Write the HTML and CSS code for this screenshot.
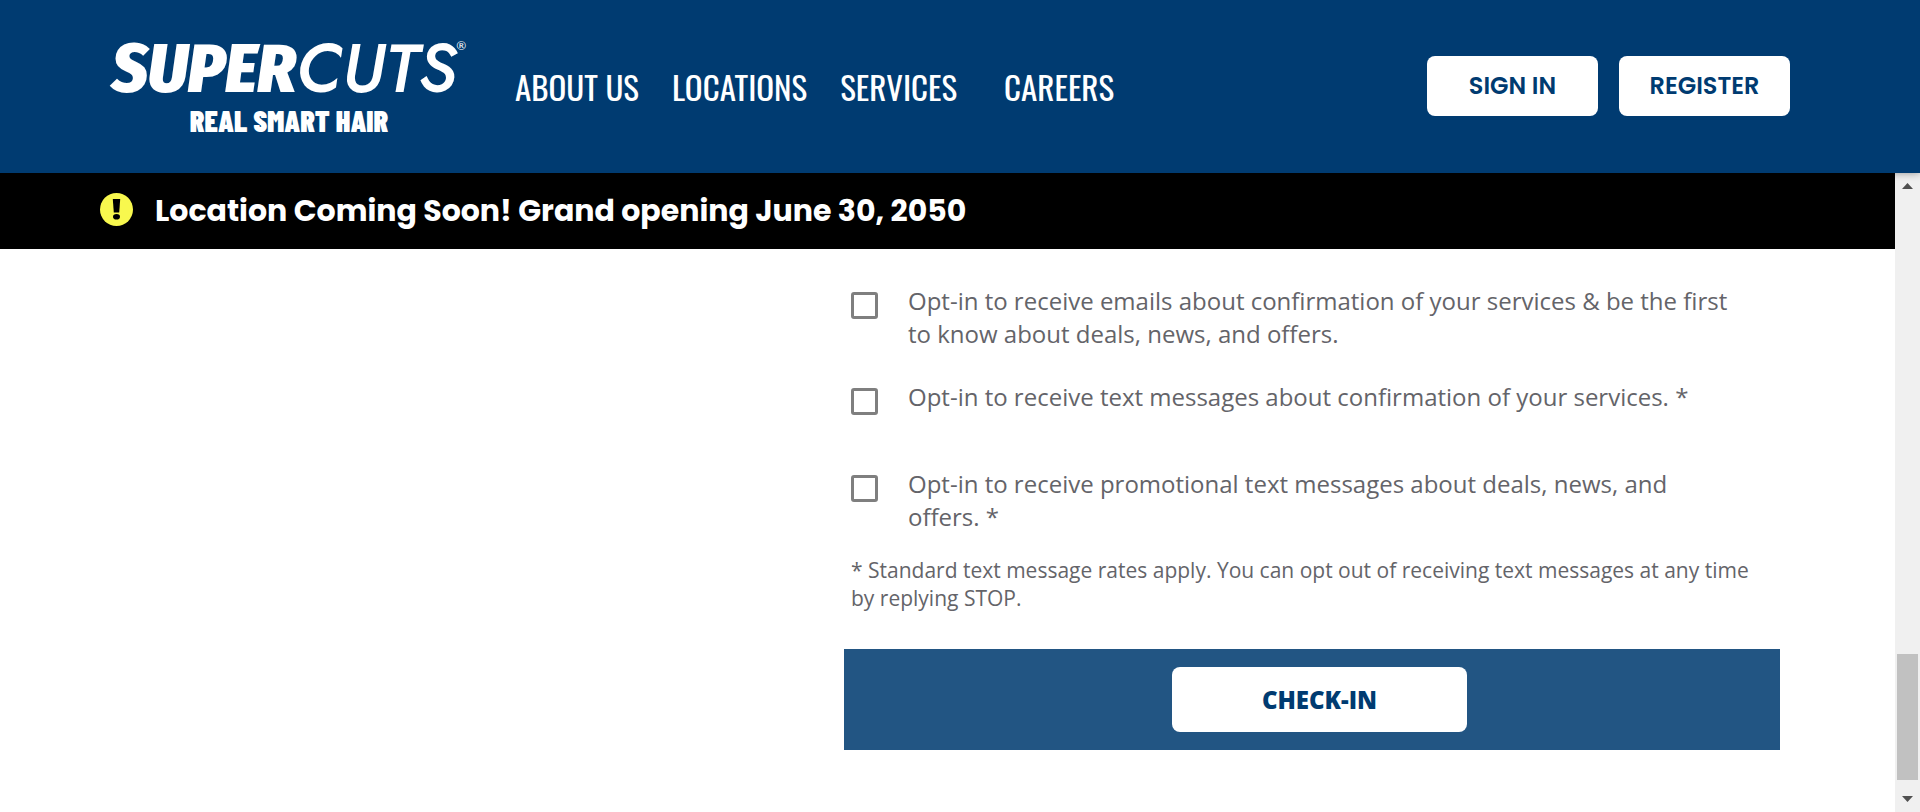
FILE: index.html
```html
<!DOCTYPE html>
<html lang="en">
<head>
<meta charset="utf-8">
<meta name="viewport" content="width=device-width, initial-scale=1">
<title>Supercuts Check-In</title>
<link rel="stylesheet" href="styles.css">
</head>
<body>
<div class="page">
  <header class="header">
    <a class="logo" href="#">
      <span class="logo-name"><span class="logo-super">SUPER</span><span class="logo-cuts">CUTS</span><span class="logo-mark">®</span></span>
      <span class="logo-tagline">REAL SMART HAIR</span>
    </a>
    <nav class="nav">
      <a href="#">ABOUT US</a>
      <a href="#">LOCATIONS</a>
      <a href="#">SERVICES</a>
      <a class="nav-last" href="#">CAREERS</a>
    </nav>
    <div class="account">
      <button class="button" type="button">SIGN IN</button>
      <button class="button" type="button">REGISTER</button>
    </div>
  </header>
  <div class="body">
    <main class="main">
      <div class="banner" role="status">
        <svg class="banner-icon" viewBox="0 0 33 33" aria-hidden="true">
          <circle cx="16.5" cy="16.5" r="16.5" fill="#f8f84e"/>
          <path d="M12.8 6h7.4l-1 13.6h-5.4z" fill="#000"/>
          <ellipse cx="16.5" cy="23.7" rx="3.5" ry="2.8" fill="#000"/>
        </svg>
        <p class="banner-text">Location Coming Soon! Grand opening June 30, 2050</p>
      </div>
      <div class="content">
        <form class="form">
          <div class="options">
            <div class="option">
              <input type="checkbox" id="opt-email">
              <label for="opt-email">Opt-in to receive emails about confirmation of your services &amp; be the first to know about deals, news, and offers.</label>
            </div>
            <div class="option">
              <input type="checkbox" id="opt-text">
              <label for="opt-text">Opt-in to receive text messages about confirmation of your services. *</label>
            </div>
            <div class="option">
              <input type="checkbox" id="opt-promo">
              <label for="opt-promo">Opt-in to receive promotional text messages about deals, news, and offers. *</label>
            </div>
          </div>
          <p class="note">* Standard text message rates apply. You can opt out of receiving text messages at any time by replying STOP.</p>
          <div class="actions">
            <button class="button button-checkin" type="button">CHECK-IN</button>
          </div>
        </form>
      </div>
    </main>
    <div class="scrollbar" aria-hidden="true">
      <svg class="scroll-arrow" viewBox="0 0 11 6"><path d="M0 6 5.5 0 11 6z"/></svg>
      <div class="scroll-track"><div class="scroll-thumb"></div></div>
      <svg class="scroll-arrow" viewBox="0 0 11 6"><path d="M0 0 5.5 6 11 0z"/></svg>
    </div>
  </div>
</div>
</body>
</html>
```
FILE: styles.css
```css
* {
  box-sizing: border-box;
}

body {
  margin: 0;
  background: #fff;
  color: #646469;
  font-family: "Open Sans", sans-serif;
}

.page {
  display: flex;
  flex-direction: column;
  min-height: 100vh;
}

.header {
  display: flex;
  align-items: center;
  padding: 36px 130px 37px 113px;
  background: #003b71;
  box-shadow: 0 0 8px rgba(0, 0, 0, 0.4);
  z-index: 1;
}

.logo {
  display: flex;
  flex-direction: column;
  align-items: center;
  width: 352px;
  color: #fff;
  text-decoration: none;
  white-space: nowrap;
}

.logo-name {
  display: flex;
  align-items: baseline;
  height: 68px;
}

.logo-super {
  font: italic 900 69px/66px "Fira Sans Condensed", "Barlow Condensed", Oswald, sans-serif;
}

.logo-cuts {
  font: italic 500 68px/66px Jost, Lato, sans-serif;
}

.logo-mark {
  align-self: flex-start;
  font: 12px/20px Lato, sans-serif;
}

.logo-tagline {
  font: 900 30px/32px "Barlow Condensed", Oswald, sans-serif;
}

.nav {
  display: flex;
  gap: 33px;
  margin-left: 50px;
  padding-top: 2px;
}

.nav a {
  color: #fff;
  font: 400 33px/36px Oswald, sans-serif;
  text-decoration: none;
  white-space: nowrap;
}

.nav .nav-last {
  margin-left: 14px;
}

.account {
  display: flex;
  gap: 21px;
  margin-left: auto;
}

.button {
  width: 171px;
  height: 60px;
  padding: 0;
  border: 0;
  border-radius: 8px;
  background: #fff;
  color: #003b71;
  font: 600 24px/30px Poppins, Inter, sans-serif;
}

.body {
  display: flex;
  flex: 1;
}

.main {
  flex: 1;
  min-width: 0;
}

.banner {
  display: flex;
  align-items: center;
  gap: 22px;
  min-height: 76px;
  padding: 0 100px;
  background: #000;
}

.banner-icon {
  flex: none;
  width: 33px;
  height: 33px;
  margin-bottom: 3px;
}

.banner-text {
  margin: 0;
  color: #fff;
  font: 700 30px/40px Poppins, Inter, sans-serif;
}

.content {
  display: grid;
  grid-template-columns: 844fr 936fr 115fr;
  padding: 35px 0 62px;
}

.form {
  grid-column: 2;
}

.options {
  display: flex;
  flex-direction: column;
  gap: 30px;
  padding: 0 36px 0 7px;
}

.option {
  display: flex;
  gap: 30px;
  min-height: 57px;
}

.option input {
  flex: none;
  width: 27px;
  height: 27px;
  margin: 8px 0 0;
  appearance: none;
  border: 3px solid #7f7f7f;
  border-radius: 3px;
  background: #fff;
}

.option input:checked {
  background: #003b71;
}

.option label {
  font-size: 24px;
  line-height: 33px;
}

.note {
  margin: 23px 24px 37px 7px;
  font-size: 21px;
  line-height: 28px;
}

.actions {
  display: flex;
  justify-content: center;
  padding: 18px 0 18px 15px;
  background: #225583;
}

.button-checkin {
  width: 295px;
  height: 65px;
  font: 800 24px/33px "Open Sans", sans-serif;
}

.scrollbar {
  display: flex;
  flex-direction: column;
  align-items: center;
  width: 25px;
  padding: 10px 2px;
  background: #f0f0f0;
}

.scroll-arrow {
  width: 11px;
  height: 6px;
  fill: #505050;
}

.scroll-track {
  display: flex;
  flex: 1;
  flex-direction: column;
  justify-content: flex-end;
  width: 100%;
  padding: 10px 0 16px;
}

.scroll-thumb {
  height: 126px;
  background: #c1c1c1;
}
```
